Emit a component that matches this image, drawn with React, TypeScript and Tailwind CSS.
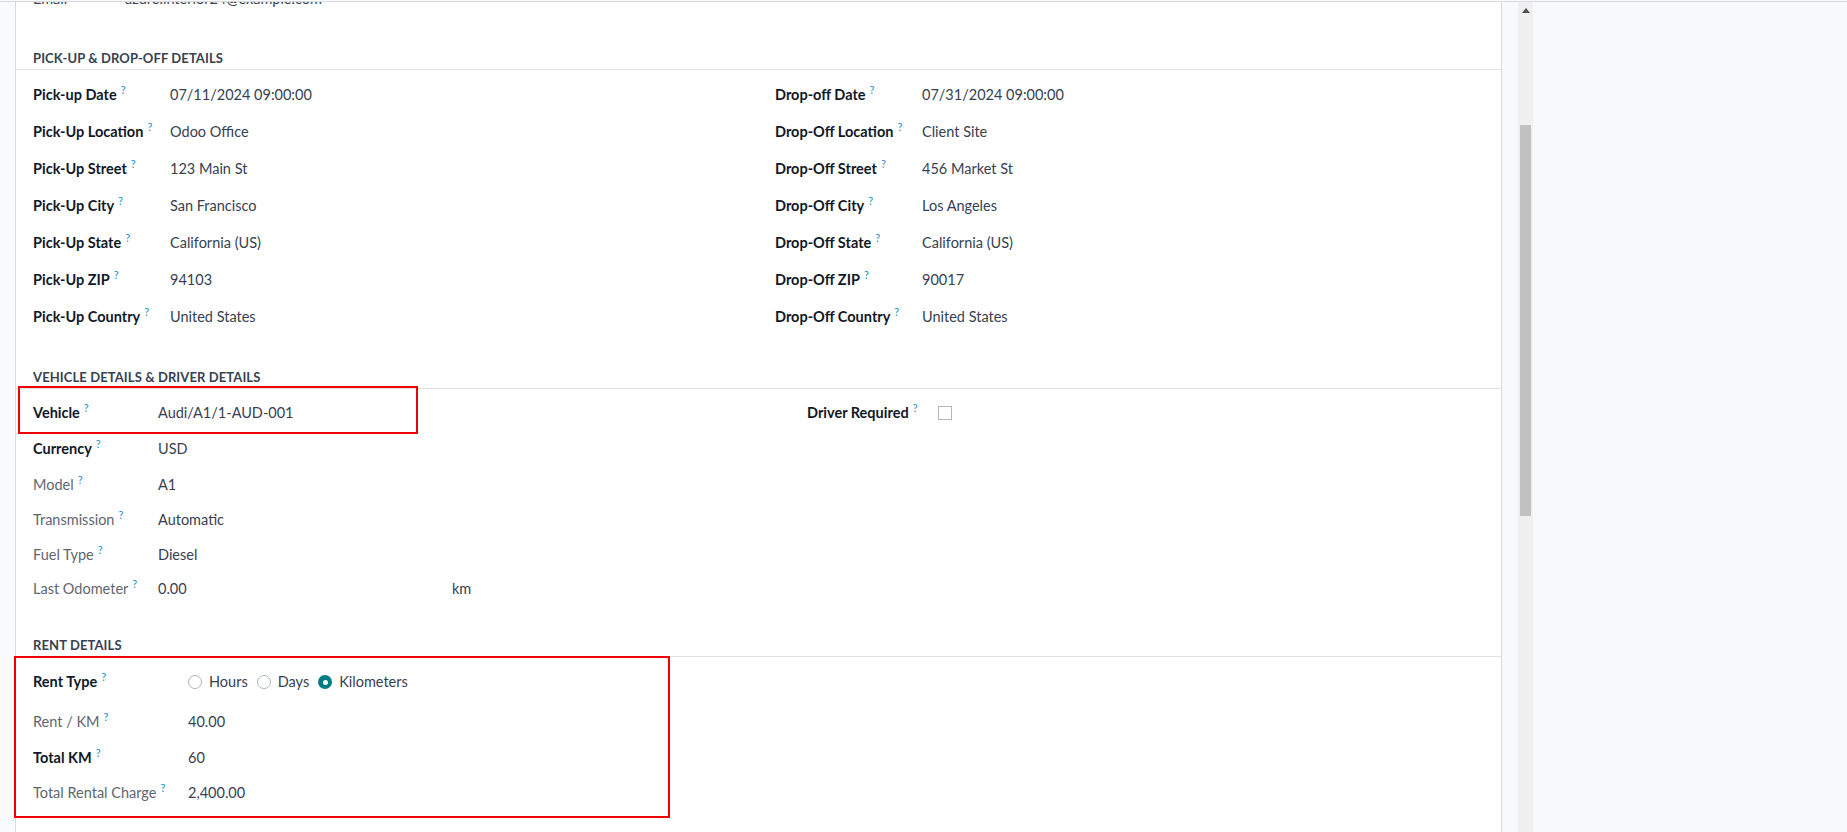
import React from "react";

const Q = () => (
  <span className="relative -top-[6px] ml-[4px] text-[11px] font-normal leading-none text-[#1b8ec2]">?</span>
);

type RowProps = {
  label: string;
  value?: React.ReactNode;
  lw: string;
  h: string;
  gray?: boolean;
};

function Row({ label, value, lw, h, gray }: RowProps) {
  return (
    <div className={`flex items-center ${h}`}>
      <div
        className={`${lw} shrink-0 whitespace-nowrap ${
          gray ? "font-normal text-[#5f6670]" : "font-bold text-[#111827]"
        }`}
      >
        {label}
        <Q />
      </div>
      <div className="whitespace-nowrap text-[#374151]">{value}</div>
    </div>
  );
}

function SectionTitle({ title, mt }: { title: string; mt: string }) {
  return (
    <div
      className={`${mt} flex h-[22px] items-center border-b border-[#dee2e6] pl-[17px] text-[13px] font-bold uppercase tracking-[0.1px] text-[#374151]`}
    >
      {title}
    </div>
  );
}

function Radio({ checked, label }: { checked?: boolean; label: string }) {
  return (
    <div className="mr-[9px] flex items-center gap-[7px]">
      {checked ? (
        <span className="flex h-[14px] w-[14px] items-center justify-center rounded-full bg-[#017e84]">
          <span className="h-[5px] w-[5px] rounded-full bg-white" />
        </span>
      ) : (
        <span className="h-[14px] w-[14px] rounded-full border border-[#adb5bd] bg-white" />
      )}
      <span className="text-[#374151]">{label}</span>
    </div>
  );
}

export default function App() {
  const pickLeft: [string, string][] = [
    ["Pick-up Date", "07/11/2024 09:00:00"],
    ["Pick-Up Location", "Odoo Office"],
    ["Pick-Up Street", "123 Main St"],
    ["Pick-Up City", "San Francisco"],
    ["Pick-Up State", "California (US)"],
    ["Pick-Up ZIP", "94103"],
    ["Pick-Up Country", "United States"],
  ];
  const pickRight: [string, string][] = [
    ["Drop-off Date", "07/31/2024 09:00:00"],
    ["Drop-Off Location", "Client Site"],
    ["Drop-Off Street", "456 Market St"],
    ["Drop-Off City", "Los Angeles"],
    ["Drop-Off State", "California (US)"],
    ["Drop-Off ZIP", "90017"],
    ["Drop-Off Country", "United States"],
  ];

  return (
    <div className="relative h-[832px] w-[1847px] overflow-hidden bg-[#f8f9fa] pt-[1px] text-[14.5px] [font-family:Lato,sans-serif]">
      <div className="flex h-[831px] border-t border-[#d8dadd]">
        {/* left gutter */}
        <div className="w-[15px] shrink-0 bg-[#f9fafb]" />
        {/* form sheet */}
        <div className="w-[1487px] shrink-0 overflow-hidden border-x border-[#d8dadd] bg-white">
          {/* cut off email row */}
          <div className="-mt-[22px] flex h-[37px] items-center pl-[17px]">
            <div className="w-[92px] shrink-0 text-[#374151]">Email</div>
            <div className="text-[#374151]">azure.interior24@example.com</div>
          </div>

          <SectionTitle title="Pick-Up & Drop-Off Details" mt="mt-[31px]" />
          <div className="mt-[6px] flex pl-[17px]">
            <div className="flex w-[742px] shrink-0 flex-col">
              {pickLeft.map(([l, v]) => (
                <Row key={l} label={l} value={v} lw="w-[137px]" h="h-[37px]" />
              ))}
            </div>
            <div className="flex flex-col">
              {pickRight.map(([l, v]) => (
                <Row key={l} label={l} value={v} lw="w-[147px]" h="h-[37px]" />
              ))}
            </div>
          </div>

          <SectionTitle title="Vehicle Details & Driver Details" mt="mt-[32px]" />
          <div className="mt-[6px] flex pl-[17px]">
            <div className="flex w-[774px] shrink-0 flex-col">
              <Row label="Vehicle" value="Audi/A1/1-AUD-001" lw="w-[125px]" h="h-[36px]" />
              <Row label="Currency" value="USD" lw="w-[125px]" h="h-[36px]" />
              <Row label="Model" value="A1" lw="w-[125px]" h="h-[35px]" gray />
              <Row label="Transmission" value="Automatic" lw="w-[125px]" h="h-[35px]" gray />
              <Row label="Fuel Type" value="Diesel" lw="w-[125px]" h="h-[35px]" gray />
              <Row
                label="Last Odometer"
                value={
                  <div className="flex">
                    <span className="w-[294px]">0.00</span>
                    <span>km</span>
                  </div>
                }
                lw="w-[125px]"
                h="h-[34px]"
                gray
              />
            </div>
            <div className="flex flex-col">
              <div className="flex h-[36px] items-center">
                <div className="w-[131px] shrink-0 whitespace-nowrap font-bold text-[#111827]">
                  Driver Required
                  <Q />
                </div>
                <span className="h-[14px] w-[14px] border border-[#b3b7bb] bg-white" />
              </div>
            </div>
          </div>

          <SectionTitle title="Rent Details" mt="mt-[29px]" />
          <div className="mt-[5px] flex flex-col pl-[17px]">
            <Row
              label="Rent Type"
              value={
                <div className="flex items-center">
                  <Radio label="Hours" />
                  <Radio label="Days" />
                  <Radio label="Kilometers" checked />
                </div>
              }
              lw="w-[155px]"
              h="h-[40px]"
            />
            <Row label="Rent / KM" value="40.00" lw="w-[155px]" h="h-[40px]" gray />
            <Row label="Total KM" value="60" lw="w-[155px]" h="h-[32px]" />
            <Row label="Total Rental Charge" value="2,400.00" lw="w-[155px]" h="h-[38px]" gray />
          </div>
        </div>
        {/* gap */}
        <div className="w-[16px] shrink-0" />
        {/* scrollbar */}
        <div className="flex w-[15px] shrink-0 flex-col items-center bg-[#f0f0f0] pt-[6px]">
          <svg width="8" height="5" viewBox="0 0 8 5">
            <polygon points="4,0 8,5 0,5" fill="#505050" />
          </svg>
          <div className="mt-[112px] h-[391px] w-[11px] bg-[#c1c1c1]" />
        </div>
        {/* right area */}
        <div className="flex-1 bg-[#f8f9fa]" />
      </div>

      {/* annotation boxes */}
      <div className="pointer-events-none absolute left-[18px] top-[386px] h-[48px] w-[400px] border-2 border-[#f00000]" />
      <div className="pointer-events-none absolute left-[14px] top-[656px] h-[162px] w-[656px] border-2 border-[#f00000]" />
    </div>
  );
}
